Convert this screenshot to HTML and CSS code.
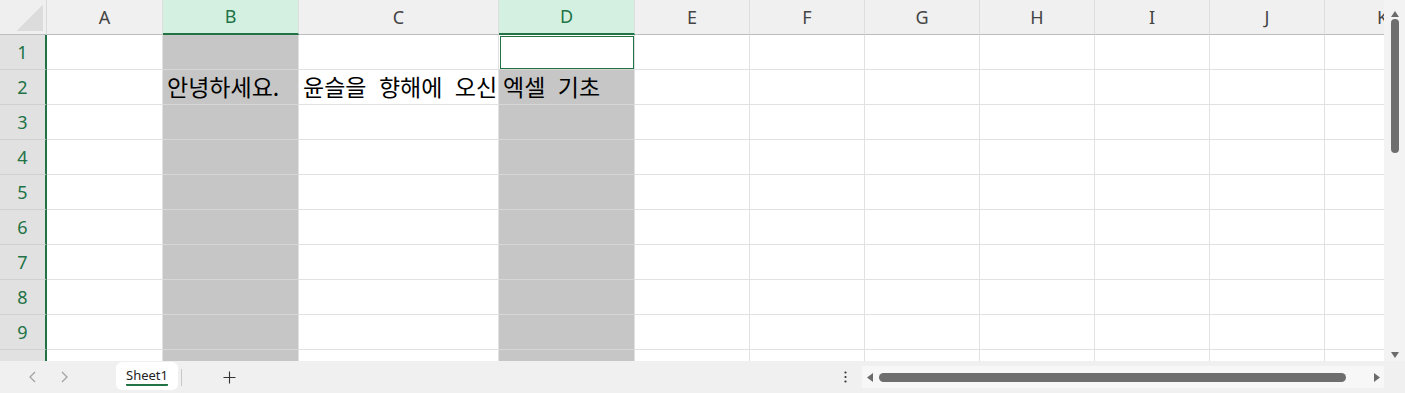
FILE: index.html
```html
<!DOCTYPE html>
<html lang="ko">
<head>
    <meta charset="UTF-8">
    <meta name="viewport" content="width=device-width, initial-scale=1.0">
    <title>Book1</title>
    <link rel="stylesheet" href="styles.css">
</head>
<body>
    <div class="workbook">
        <div class="main">
            <div class="sheet">
                <!-- column headers -->
                <div class="corner"></div>
                <div class="h">A</div>
                <div class="h sel">B</div>
                <div class="h">C</div>
                <div class="h sel">D</div>
                <div class="h">E</div>
                <div class="h">F</div>
                <div class="h">G</div>
                <div class="h">H</div>
                <div class="h">I</div>
                <div class="h">J</div>
                <div class="h k">K</div>

                <div class="rh">1</div>
                <div class="c"></div><div class="c sel"></div><div class="c"></div><div class="c sel active"></div>
                <div class="c"></div><div class="c"></div><div class="c"></div><div class="c"></div><div class="c"></div><div class="c"></div><div class="c"></div>

                <div class="rh">2</div>
                <div class="c"></div>
                <div class="c sel">안녕하세요.</div>
                <div class="c">윤슬을 향해에 오신</div>
                <div class="c sel">엑셀 기초</div>
                <div class="c"></div><div class="c"></div><div class="c"></div><div class="c"></div><div class="c"></div><div class="c"></div><div class="c"></div>

                <div class="rh">3</div>
                <div class="c"></div><div class="c sel"></div><div class="c"></div><div class="c sel"></div>
                <div class="c"></div><div class="c"></div><div class="c"></div><div class="c"></div><div class="c"></div><div class="c"></div><div class="c"></div>

                <div class="rh">4</div>
                <div class="c"></div><div class="c sel"></div><div class="c"></div><div class="c sel"></div>
                <div class="c"></div><div class="c"></div><div class="c"></div><div class="c"></div><div class="c"></div><div class="c"></div><div class="c"></div>

                <div class="rh">5</div>
                <div class="c"></div><div class="c sel"></div><div class="c"></div><div class="c sel"></div>
                <div class="c"></div><div class="c"></div><div class="c"></div><div class="c"></div><div class="c"></div><div class="c"></div><div class="c"></div>

                <div class="rh">6</div>
                <div class="c"></div><div class="c sel"></div><div class="c"></div><div class="c sel"></div>
                <div class="c"></div><div class="c"></div><div class="c"></div><div class="c"></div><div class="c"></div><div class="c"></div><div class="c"></div>

                <div class="rh">7</div>
                <div class="c"></div><div class="c sel"></div><div class="c"></div><div class="c sel"></div>
                <div class="c"></div><div class="c"></div><div class="c"></div><div class="c"></div><div class="c"></div><div class="c"></div><div class="c"></div>

                <div class="rh">8</div>
                <div class="c"></div><div class="c sel"></div><div class="c"></div><div class="c sel"></div>
                <div class="c"></div><div class="c"></div><div class="c"></div><div class="c"></div><div class="c"></div><div class="c"></div><div class="c"></div>

                <div class="rh">9</div>
                <div class="c"></div><div class="c sel"></div><div class="c"></div><div class="c sel"></div>
                <div class="c"></div><div class="c"></div><div class="c"></div><div class="c"></div><div class="c"></div><div class="c"></div><div class="c"></div>

                <div class="rh">10</div>
                <div class="c"></div><div class="c sel"></div><div class="c"></div><div class="c sel"></div>
                <div class="c"></div><div class="c"></div><div class="c"></div><div class="c"></div><div class="c"></div><div class="c"></div><div class="c"></div>
            </div>

            <div class="vscroll">
                <svg class="arrow-up" width="8" height="6" viewBox="0 0 8 6"><path d="M4 0L8 6H0z" fill="#6b6b6b"/></svg>
                <div class="vthumb"></div>
                <div class="fill"></div>
                <svg class="arrow-down" width="8" height="6" viewBox="0 0 8 6"><path d="M0 0H8L4 6z" fill="#6b6b6b"/></svg>
            </div>
        </div>

        <div class="tabbar">
            <button class="nav">
                <svg width="7" height="12" viewBox="0 0 7 12"><path d="M6 1L1 6l5 5" fill="none" stroke="#a0a0a0" stroke-width="1.2"/></svg>
            </button>
            <button class="nav">
                <svg width="7" height="12" viewBox="0 0 7 12"><path d="M1 1l5 5-5 5" fill="none" stroke="#a0a0a0" stroke-width="1.2"/></svg>
            </button>
            <div class="tab"><span>Sheet1</span></div>
            <div class="sep"></div>
            <button class="add">
                <svg width="13" height="13" viewBox="0 0 13 13"><path d="M6.5 0.5v12M0.5 6.5h12" stroke="#333" stroke-width="1.1"/></svg>
            </button>
            <div class="fill"></div>
            <button class="more">
                <svg width="3" height="12" viewBox="0 0 3 12"><circle cx="1.5" cy="1.5" r="1.1" fill="#333"/><circle cx="1.5" cy="6" r="1.1" fill="#333"/><circle cx="1.5" cy="10.5" r="1.1" fill="#333"/></svg>
            </button>
            <div class="hscroll">
                <svg width="6" height="9" viewBox="0 0 6 9"><path d="M6 0V9L0 4.5z" fill="#6b6b6b"/></svg>
                <div class="hthumb"></div>
                <div class="fill"></div>
                <svg width="6" height="9" viewBox="0 0 6 9"><path d="M0 0V9L6 4.5z" fill="#6b6b6b"/></svg>
            </div>
        </div>
    </div>
</body>
</html>
```

FILE: styles.css
```css
* {
    margin: 0;
    padding: 0;
    box-sizing: border-box;
}

body {
    font-family: 'Noto Sans', 'Liberation Sans', sans-serif;
    background: #f0f0f0;
}

button {
    border: none;
    background: none;
    display: flex;
    align-items: center;
    justify-content: center;
}

.workbook {
    width: 1405px;
    height: 393px;
    display: flex;
    flex-direction: column;
    overflow: hidden;
}

.main {
    display: flex;
    height: 361px;
}

.sheet {
    width: 1384px;
    display: grid;
    grid-template-columns: 47px 116px 136px 200px 136px repeat(6, 115px) 1fr;
    grid-auto-rows: 35px;
    overflow: hidden;
    background: #fff;
}

.corner {
    background: linear-gradient(to bottom right, transparent 50%, #dcdcdc 50%) no-repeat right 3px bottom 3px / 27px 26px, #efefef;
    border-right: 1px solid #dadada;
    border-bottom: 1px solid #bdbdbd;
}

.h {
    background: #f0f0f0;
    border-right: 1px solid #dedede;
    border-bottom: 1px solid #bdbdbd;
    text-align: center;
    font-size: 18px;
    line-height: 34px;
    color: #444;
}

.h.sel {
    background: #d3f0e0;
    color: #217346;
    border-bottom: 2px solid #217346;
    line-height: 33px;
}

.h.k {
    text-align: left;
    text-indent: 52px;
}

.rh {
    background: #e1e1e1;
    border-right: 2px solid #217346;
    border-bottom: 1px solid #d0d0d0;
    color: #217346;
    text-align: center;
    font-size: 18px;
    line-height: 34px;
}

.c {
    border-right: 1px solid #e1e1e1;
    border-bottom: 1px solid #e1e1e1;
    padding: 0 0 0 4px;
    font-family: 'Noto Sans CJK KR', sans-serif;
    font-size: 23px;
    line-height: 32px;
    word-spacing: 6px;
    white-space: nowrap;
    overflow: hidden;
    color: #000;
}

.c.sel {
    background: #c6c6c6;
    border-bottom-color: #d6d6d6;
}

.c.active {
    background: #fff;
    outline: 1px solid #217346;
    outline-offset: -2px;
}

.vscroll {
    width: 21px;
    display: flex;
    flex-direction: column;
    align-items: center;
    padding: 11px 0 3px;
    background: #f3f3f3;
}

.vthumb {
    width: 8px;
    height: 134px;
    margin-top: 2px;
    border-radius: 4px;
    background: #6e6e6e;
}

.fill {
    flex: 1;
}

.tabbar {
    height: 32px;
    display: flex;
    align-items: center;
    padding-left: 16px;
    font-size: 13px;
    color: #222;
}

.nav {
    width: 32px;
    height: 28px;
}

.tab {
    align-self: flex-start;
    margin-top: 1px;
    margin-left: 36px;
    width: 62px;
    height: 28px;
    background: #fff;
    border-radius: 6px;
    display: flex;
    justify-content: center;
    padding-top: 4px;
}

.tab span {
    height: 20px;
    border-bottom: 2px solid #217346;
    border-radius: 1px;
}

.sep {
    width: 1px;
    height: 17px;
    margin-left: 3px;
    background: #c8c8c8;
}

.add {
    width: 32px;
    height: 28px;
    margin-left: 31px;
}

.more {
    width: 14px;
    height: 20px;
    margin-right: 10px;
}

.hscroll {
    width: 522px;
    height: 22px;
    margin-right: 21px;
    display: flex;
    align-items: center;
    padding: 0 4px 0 5px;
    background: #f7f7f7;
}

.hthumb {
    width: 467px;
    height: 9px;
    margin-left: 6px;
    border-radius: 5px;
    background: #6e6e6e;
}
```
